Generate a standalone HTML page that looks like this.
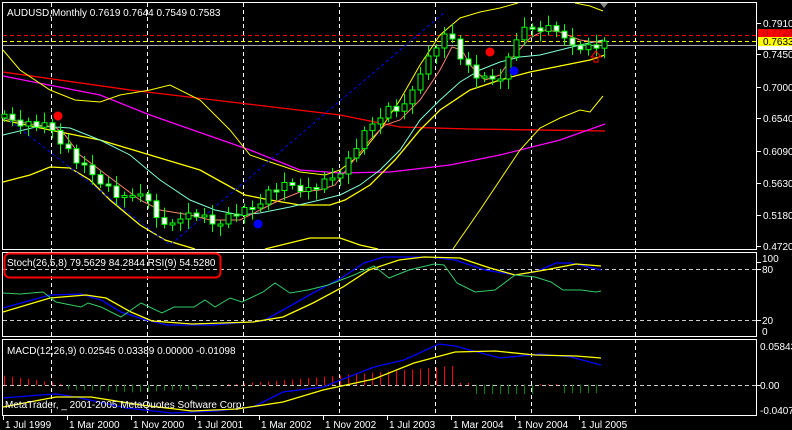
<!DOCTYPE html>
<html><head><meta charset="utf-8"><style>
html,body{margin:0;padding:0;background:#000;width:792px;height:430px;overflow:hidden}
svg{display:block}
text{font-family:"Liberation Sans",sans-serif;font-size:10px;fill:#fff}
</style></head><body>
<svg id="s" width="792" height="430" viewBox="0 0 792 430" xmlns="http://www.w3.org/2000/svg">
<rect width="792" height="430" fill="#000"/>
<!-- panels -->
<rect x="2.5" y="2.5" width="754" height="247" fill="none" stroke="#fff"/>
<rect x="2.5" y="252.5" width="754" height="84" fill="none" stroke="#fff"/>
<rect x="2.5" y="339.5" width="754" height="76" fill="none" stroke="#fff"/>
<g stroke="#fff" stroke-dasharray="4,3" stroke-width="1">
<path d="M51.5 3V416M147.5 3V416M243.5 3V416M339.5 3V416M435.5 3V416M531.5 3V416M635.5 3V416"/>
<path d="M3 269.5H756M3 320.5H756M3 385.5H756" stroke="#ccc"/>
</g>
<path d="M3 35.5H756" stroke="#f00" stroke-dasharray="4,3"/>
<path d="M3 41.5H756" stroke="#ff0" stroke-dasharray="4,3"/>
<path d="M3 45.5H756" stroke="#aaa"/>
<g fill="none" stroke-width="1">
<polyline stroke="#f00" stroke-width="1.3" points="3,72 130,90 340,115 400,127 470,129 605,131"/>
<polyline stroke="#f0f" stroke-width="1.3" points="3,76 100,95 150,115 250,150 300,170 340,173 390,172 450,165 500,155 560,140 605,124"/>
<polyline stroke="#ff0" points="3,50 20,70 50,90 75,100 100,102 120,95 150,90 170,85 200,100 230,130 250,155 270,162 300,172 325,175 340,170 360,155 380,130 400,100 420,65 440,35 460,18 480,12 500,8 518,3"/>
<polyline stroke="#ff0" points="575,3 590,6 603,11"/>
<polyline stroke="#ff0" stroke-width="1.3" points="3,120 50,130 100,140 150,155 200,170 245,195 270,200 300,205 330,205 345,200 370,185 395,160 420,130 440,110 470,90 500,80 530,72 560,66 590,60 605,55"/>
<polyline stroke="#ff0" stroke-width="1.3" points="3,182 30,175 50,167 70,168 90,180 110,200 140,225 165,240 195,249"/>
<polyline stroke="#ff0" stroke-width="1.3" points="265,249 310,238 340,238 360,245 378,249"/>
<polyline stroke="#ff0" points="453,249 480,210 500,180 520,150 540,128 560,118 580,110 590,112 603,96"/>
<polyline stroke="#7fffd4" points="3,135 40,126 70,128 100,140 130,155 160,180 190,200 215,210 240,215 260,213 290,207 320,200 340,195 360,185 380,170 400,150 420,120 440,100 460,82 480,70 500,62 520,57 540,55 560,50 580,45 603,40"/>
<polyline stroke="#fa8072" points="3,118 30,124 55,127 65,135 80,155 100,170 120,185 140,200 160,210 190,215 210,220 240,220 260,210 280,200 300,192 320,190 335,185 350,165 370,140 385,125 400,120 420,100 440,70 452,47 462,50 470,65 485,80 500,75 510,60 530,38 545,30 560,32 580,40 603,43"/>
<path d="M5 117L170 245L445 12" stroke="#00f" stroke-dasharray="3,3"/>
</g>
<g id="candles"></g>
<circle cx="58" cy="116" r="4.5" fill="#f00"/>
<circle cx="490" cy="52" r="4.5" fill="#f00"/>
<circle cx="258" cy="224" r="4.5" fill="#00f"/>
<circle cx="514" cy="71" r="4.5" fill="#00f"/>
<path d="M596 51L601 57H598V62H594V57H591Z" fill="none" stroke="#f00"/>
<path d="M600 3H608L604 8Z" fill="#888"/>
<!-- right axis -->
<g stroke="#fff"><path d="M757 23.5h4M757 54.5h4M757 87.5h4M757 118.5h4M757 151.5h4M757 183.5h4M757 215.5h4M757 246.5h4M757 262.5h4M757 269.5h4M757 320.5h4M757 385.5h4"/></g>
<rect x="758" y="45" width="34" height="5" fill="#fff"/>
<rect x="758" y="29" width="34" height="8" fill="#f00"/>
<rect x="758" y="37" width="34" height="9" fill="#ff0"/>
<text x="763" y="27">0.7910</text>
<text x="763" y="36" fill="#800" style="fill:#a00">0.7724</text>
<text x="763" y="45" style="fill:#000">0.7633</text>
<text x="763" y="58">0.7450</text>
<text x="763" y="91">0.7000</text>
<text x="763" y="122">0.6540</text>
<text x="763" y="155">0.6090</text>
<text x="763" y="187">0.5630</text>
<text x="763" y="219">0.5180</text>
<text x="763" y="250">0.4720</text>
<text x="762" y="262">100</text>
<text x="762" y="273">80</text>
<text x="762" y="324">20</text>
<text x="762" y="335">0</text>
<text x="760" y="350">0.05843</text>
<text x="760" y="389">0.00</text>
<text x="760" y="414">-0.0407</text>
<text x="7" y="16">AUDUSD,Monthly  0.7619 0.7644 0.7549 0.7583</text>
<!-- stoch -->
<g fill="none">
<polyline stroke="#00f" stroke-width="1.3" points="3,308 50,295 81,294 101,300 121,312 146,320 167,325 212,325 263,321 283,310 313,293 343,277 364,263 384,257 429,257 455,260 485,270 515,275 535,272 556,263 571,263 601,270"/>
<polyline stroke="#ff0" stroke-width="1.3" points="3,312 50,298 86,295 106,298 131,312 152,321 192,324 253,322 283,317 313,303 343,287 369,270 399,260 424,257 460,258 490,268 515,275 545,270 576,264 601,266"/>
<polyline stroke="#3c6" points="3,293 20,294 43,292 56,302 71,305 81,307 88,303 101,307 121,317 141,303 162,313 174,307 194,307 205,300 215,307 230,298 242,302 263,292 275,283 290,293 308,290 328,285 354,275 374,266 389,278 409,270 434,264 444,265 457,283 475,292 495,290 515,275 535,277 551,282 563,290 581,290 596,292 601,291"/>
</g>
<rect x="4.5" y="253.5" width="216" height="24" rx="5" fill="none" stroke="#f00" stroke-width="2"/>
<text x="7" y="266">Stoch(26,5,8) 79.5629 84.2844  RSI(9) 54.5280</text>
<!-- macd -->
<g id="hist"></g>
<g fill="none" stroke-width="1.3">
<polyline stroke="#00f" points="3,398 40,395 56,394 76,397 126,408 172,413 217,411 253,407 283,392 323,387 374,367 404,360 439,344 455,346 470,350 500,358 540,354 571,357 601,365"/>
<polyline stroke="#ff0" points="3,407 56,397 91,397 141,405 192,411 237,409 283,402 323,390 374,379 414,363 455,352 495,351 535,355 576,356 601,358"/>
</g>
<text x="7" y="354">MACD(12,26,9) 0.02545 0.03389 0.00000 -0.01098</text>
<text x="5" y="408">MetaTrader, _ 2001-2005 MetaQuotes Software Corp.</text>
<!-- dates -->
<g stroke="#fff"><path d="M3.5 416v4M67.5 416v4M131.5 416v4M195.5 416v4M259.5 416v4M323.5 416v4M387.5 416v4M451.5 416v4M515.5 416v4M579.5 416v4"/></g>
<text x="5" y="428">1 Jul 1999</text>
<text x="69" y="428">1 Mar 2000</text>
<text x="133" y="428">1 Nov 2000</text>
<text x="197" y="428">1 Jul 2001</text>
<text x="261" y="428">1 Mar 2002</text>
<text x="325" y="428">1 Nov 2002</text>
<text x="389" y="428">1 Jul 2003</text>
<text x="453" y="428">1 Mar 2004</text>
<text x="517" y="428">1 Nov 2004</text>
<text x="581" y="428">1 Jul 2005</text>
</svg>
<script>
(function(){
var NS="http://www.w3.org/2000/svg";
var pts=[[3,118],[20,122],[35,125],[50,128],[60,140],[75,160],[85,170],[100,180],[115,195],[125,200],[140,190],[165,230],[180,215],[200,215],[210,225],[230,215],[250,210],[270,190],[290,185],[310,190],[330,180],[345,165],[360,140],[375,120],[385,108],[403,110],[410,95],[420,70],[430,55],[440,40],[450,35],[460,55],[470,70],[480,80],[490,80],[500,75],[510,55],[517,35],[530,28],[545,27],[560,30],[565,45],[575,45],[590,47],[605,45]];
function f(x){for(var i=1;i<pts.length;i++){if(x<=pts[i][0]){var a=pts[i-1],b=pts[i];return a[1]+(b[1]-a[1])*(x-a[0])/(b[0]-a[0]);}}return pts[pts.length-1][1];}
var g=document.getElementById("candles"),h="";
var prev=f(3);
for(var i=0;i<76;i++){
 var x=4+8*i; if(x>606)break;
 var c=f(x)+((i*7)%5-2)*2; var o=prev; prev=c;
 var top=Math.min(o,c),bot=Math.max(o,c); if(bot-top<2)bot=top+2;
 var hi=top-4-(i%3)*3,lo=bot+4+(i%4)*2;
 h+='<line x1="'+(x+.5)+'" y1="'+hi+'" x2="'+(x+.5)+'" y2="'+lo+'" stroke="#0f0"/>';
 if(c>o) h+='<rect x="'+(x-2)+'" y="'+top+'" width="5" height="'+(bot-top)+'" fill="#fff" stroke="#0f0"/>';
 else h+='<rect x="'+(x-2)+'" y="'+top+'" width="5" height="'+(bot-top)+'" fill="#000" stroke="#0f0"/>';
}
g.innerHTML=h;
var hs="";
for(var i=0;i<76;i++){var x=4+8*i;if(x>602)break;var v;
 if(x<62)v=-(10-x/7);else if(x<200)v=4+ (x<130?(x-62)/20:(200-x)/20);else if(x<225)v=1;
 else if(x<460)v=-Math.max(1,(x-225)/12);else if(x<475)v=-2;else if(x<536)v=9;else if(x<560)v=-1;else v=8;
 if(v<0)hs+='<line x1="'+(x+.5)+'" y1="385" x2="'+(x+.5)+'" y2="'+(385+v)+'" stroke="#f00"/>';
 else hs+='<line x1="'+(x+.5)+'" y1="385" x2="'+(x+.5)+'" y2="'+(385+v)+'" stroke="#080"/>';}
document.getElementById("hist").innerHTML=hs;
})();
</script>
</body></html>
